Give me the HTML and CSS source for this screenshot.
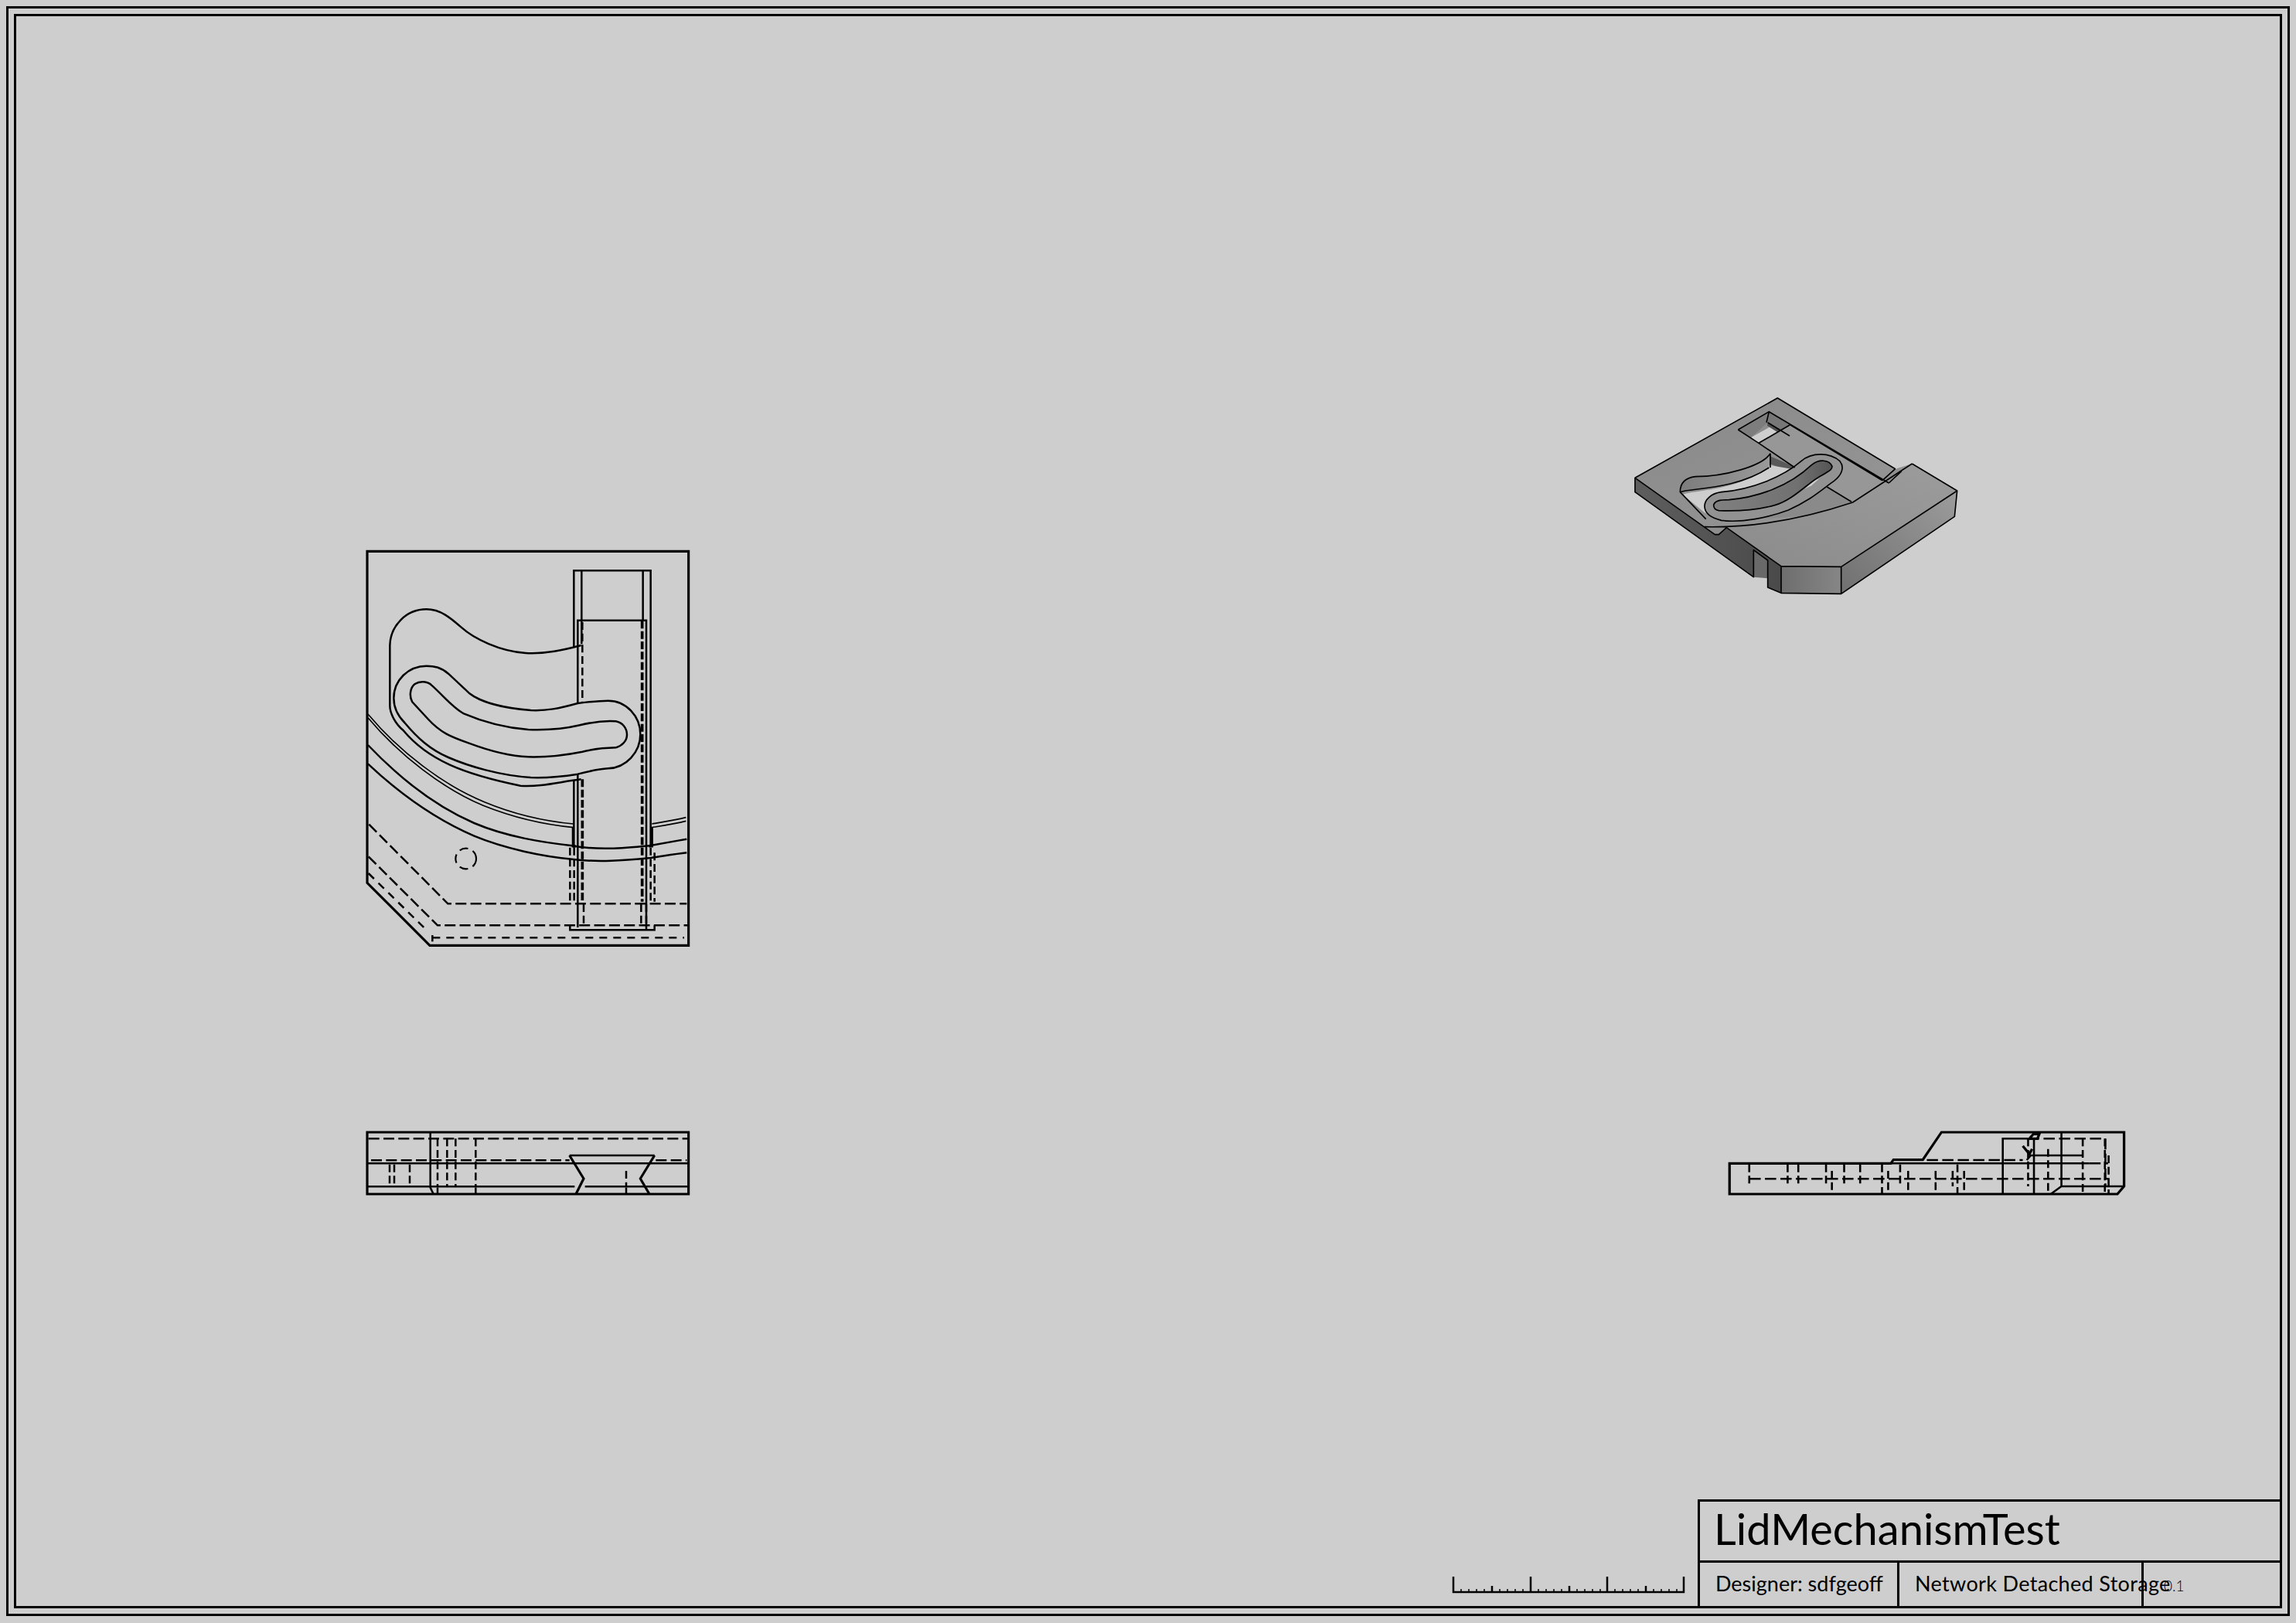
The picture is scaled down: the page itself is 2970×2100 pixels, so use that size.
FILE: index.html
```html
<!DOCTYPE html>
<html lang="en">
<head>
<meta charset="utf-8">
<title>LidMechanismTest</title>
<link rel="stylesheet" href="styles.css">
</head>
<body>
<main class="sheet">
  <svg class="drawing" viewBox="0 0 2970 2100" aria-hidden="true">
    <defs>
      <linearGradient id="gTop" x1="0" y1="0" x2="1" y2="1"><stop offset="0" stop-color="#888"/><stop offset="1" stop-color="#979797"/></linearGradient>
      <linearGradient id="gBlock" x1="0" y1="1" x2="1" y2="0"><stop offset="0" stop-color="#8a8a8a"/><stop offset="1" stop-color="#9c9c9c"/></linearGradient>
      <linearGradient id="gFront" x1="0" y1="0" x2="1" y2="0"><stop offset="0" stop-color="#6e6e6e"/><stop offset="1" stop-color="#868686"/></linearGradient>
      <linearGradient id="gRight" x1="0" y1="1" x2="1" y2="0"><stop offset="0" stop-color="#707070"/><stop offset="1" stop-color="#9c9c9c"/></linearGradient>
      <linearGradient id="gLeft" x1="0" y1="0" x2="1" y2="0"><stop offset="0" stop-color="#5e5e5e"/><stop offset="1" stop-color="#4a4a4a"/></linearGradient>
      <linearGradient id="gWall" x1="0" y1="0" x2="1" y2="0"><stop offset="0" stop-color="#7c7c7c"/><stop offset="1" stop-color="#9a9a9a"/></linearGradient>
      <linearGradient id="gSlot" x1="0" y1="0" x2="1" y2="0"><stop offset="0" stop-color="#808080"/><stop offset=".7" stop-color="#717171"/><stop offset="1" stop-color="#555"/></linearGradient>
    </defs>

    <!-- front view -->
    <g class="view" transform="translate(440 690) scale(.33333)">
      <path class="heavy" d="M105,70 H1352 V1600 H348 L105,1357 Z"/>
      <path class="line" d="M907,443 V145 H1205 V1210 M937,430 V145 M1175,340 V145 M922,660 V338 H1188 V1540"/>
      <path class="line" d="M922,935 V1530 M907,958 V1220"/>
      <path class="dash" d="M940,345 V660"/>
      <path class="dash-heavy" d="M1172,340 V1430 M940,955 V1440"/>
      <path class="line" d="M935,435 C880,450 800,470 720,465 C620,458 520,410 470,365 C430,330 390,295 335,295 C255,295 195,360 193,435 L193,670 C193,700 215,740 245,765 C340,880 480,935 700,980 C780,985 850,965 935,955"/>
      <path class="line" d="M922,660 C850,680 800,690 740,687 C650,680 550,660 500,620 L420,545 C390,520 365,515 335,515 C265,515 208,570 208,640 C208,680 225,710 250,735 C300,795 350,840 420,870 C500,905 620,940 740,948 C800,950 860,945 922,935 C960,925 1000,915 1040,913 C1110,910 1165,850 1165,780 C1165,710 1110,650 1040,650 C1000,650 960,655 922,660 Z"/>
      <path class="line" d="M1070,730 C1020,727 970,735 930,745 C880,757 810,765 730,762 C640,755 550,730 480,700 C440,680 400,630 355,590 C340,575 310,572 290,585 C270,600 268,635 280,655 L340,720 C390,775 430,790 500,815 C580,845 650,865 730,868 C800,870 880,860 940,848 C980,838 1030,833 1070,832 C1095,825 1113,805 1113,782 C1113,755 1095,735 1070,730 Z"/>
      <path class="line-thin" d="M108,702 C230,848 400,978 560,1043 C680,1093 800,1118 905,1128 M108,716 C230,862 400,992 555,1057 C680,1107 800,1132 905,1142 M1210,1128 C1260,1120 1300,1114 1342,1103 M1210,1142 C1260,1134 1300,1128 1342,1117"/>
      <path class="line" d="M108,822 C230,950 370,1060 520,1125 C650,1180 790,1200 895,1212 C1000,1232 1100,1222 1205,1212 C1260,1202 1300,1195 1345,1187"/>
      <path class="line" d="M108,895 C230,1010 370,1110 520,1175 C640,1225 790,1255 900,1265 C1000,1278 1100,1270 1205,1260 C1260,1252 1300,1245 1345,1240"/>
      <path class="dash-long" d="M112,1130 L418,1438 H1345 M110,1255 L378,1522 H1350"/>
      <path class="dash-short" d="M110,1320 L335,1540 M358,1570 H1335"/>
      <path class="line" d="M358,1560 V1585 M892,1522 V1540 H1220 V1522"/>
      <path class="dash" d="M892,1220 V1430 M908,1220 V1430 M1205,1220 V1430 M1220,1240 V1430 M1168,1440 V1520 M945,1440 V1520 M1188,1440 V1520"/>
      <path class="heavy" d="M904,1140 V1215 H915 M1210,1140 V1215 H1198"/>
      <circle class="dash-circle" cx="488" cy="1263" r="40"/>
    </g>

    <!-- isometric view -->
    <g class="iso" transform="translate(2080 490) scale(.33333)">
      <path fill="url(#gTop)" d="M105,385 L658,75 L1115,350 L1180,330 L950,480 L800,530 L600,570 L375,575 Z"/>
      <path fill="url(#gLeft)" d="M105,385 L415,605 L430,605 L460,578 L672,728 L672,832 L620,810 L620,705 L565,665 L565,770 L105,440 Z"/>
      <path fill="#696969" d="M565,665 L622,705 L620,775 L565,770 Z"/>
      <path fill="url(#gFront)" d="M672,728 L905,730 L905,835 L672,832 Z"/>
      <path fill="url(#gRight)" d="M905,730 L1355,435 L1345,535 L905,835 Z"/>
      <path fill="url(#gBlock)" d="M375,575 C600,580 800,530 950,480 L1075,410 L1180,330 L1355,435 L905,730 L672,728 L460,578 L430,605 L415,605 Z"/>

      <path fill="#cecece" d="M555,228 L645,178 L680,205 L585,250 Z"/>
      <path fill="#7d7d7d" d="M505,198 L625,128 L620,170 L555,228 Z"/>
      <path fill="#777" d="M625,128 L705,180 L665,205 L615,170 Z"/>
      <path fill="#4f4f4f" d="M620,170 L680,205 L665,212 L618,182 Z"/>
      <path fill="#979797" d="M585,250 L705,180 L1090,405 L950,480 L850,420 L725,345 Z"/>
      <path fill="#5a5a5a" d="M628,300 L725,342 L705,362 L630,330 Z"/>
      <path fill="#8f8f8f" d="M1065,395 L1115,350 L1140,358 L1090,405 Z"/>

      <path fill="#cecece" d="M290,450 C340,430 520,435 625,335 L720,352 L760,360 L800,420 L600,530 L450,555 L375,520 Z"/>
      <path fill="url(#gWall)" d="M630,290 C600,340 450,380 340,380 C295,385 280,410 280,440 C320,425 500,430 625,345 Z"/>
      <path fill="#8a8a8a" d="M850,420 L945,478 L800,530 L500,550 L700,510 Z"/>
      <path fill="#929292" d="M375,495 C375,470 400,445 440,440 C560,430 680,380 750,320 C790,285 860,285 900,320 C920,345 905,375 880,395 C830,430 790,470 700,510 C620,540 520,560 440,550 C400,540 375,525 375,495 Z"/>
      <path fill="url(#gSlot)" d="M410,490 C415,475 430,470 470,470 C580,460 700,420 790,335 C820,310 860,315 870,340 C870,355 855,360 830,375 C780,400 720,470 650,490 C580,510 500,515 430,512 C415,510 410,500 410,490 Z"/>
      <path fill="#cecece" d="M762,428 L800,395 L820,388 L790,415 Z"/>

      <path class="edge" d="M105,385 L658,75 L1115,350 M1180,330 L1355,435 L1345,535 L905,835 L672,832 L620,810 V705 L565,665 V770 L105,440 V385 L415,605 L430,605 L460,578 L672,728 L905,730 L1355,435 M905,730 V835 M672,728 V832 M1180,330 L950,480 C800,530 600,580 375,575"/>
      <path class="edge" d="M505,198 L625,128 L1090,405 M505,198 L585,250 L705,180 M585,250 L725,345 M850,420 L945,478 M705,178 L1065,395 M1065,395 L1115,350 M1090,405 L1140,358 M620,170 L705,222 M625,128 L615,170"/>
      <path class="edge" d="M630,290 C600,340 450,380 340,380 C295,385 280,410 280,440 C320,425 500,430 625,345 M630,290 V345 M280,440 L380,545"/>
      <path class="edge" d="M375,495 C375,470 400,445 440,440 C560,430 680,380 750,320 C790,285 860,285 900,320 C920,345 905,375 880,395 C830,430 790,470 700,510 C620,540 520,560 440,550 C400,540 375,525 375,495 Z M410,490 C415,475 430,470 470,470 C580,460 700,420 790,335 C820,310 860,315 870,340 C870,355 855,360 830,375 C780,400 720,470 650,490 C580,510 500,515 430,512 C415,510 410,500 410,490 Z"/>
    </g>

    <!-- plan view -->
    <g class="view" transform="translate(460 1440) scale(.33333)">
      <path class="heavy" d="M45,75 H1292 V315 H45 Z"/>
      <path class="line" d="M45,196 H1292 M45,286 H850 M890,286 H1292 M290,75 V290 L302,315 M318,290 V315 M466,290 V315 M1050,290 V315"/>
      <path class="dash-long" d="M50,100 H1290 M60,184 H830 M1165,184 H1285"/>
      <path class="line" d="M830,165 H1160"/>
      <path class="heavy" d="M830,165 L885,255 L855,315 M1160,165 L1105,255 L1140,315"/>
      <path class="dash" d="M132,200 V285 M150,200 V285 M210,200 V285 M318,100 V285 M355,100 V285 M388,100 V285 M466,100 V285 M1050,225 V285"/>
    </g>

    <!-- side view -->
    <g class="view" transform="translate(2220 1440) scale(.34483 .33333)">
      <path class="heavy" d="M50,196 V315 H1505 L1530,285 V75 H845 L775,182 H665 L655,196 Z"/>
      <path class="line" d="M50,196 H1400 M1075,315 V100 H1170 M1192,100 V315 M1295,75 V285 L1255,315 M1295,285 H1530 M1165,183 L1180,165 H1375"/>
      <path class="dash-long" d="M790,183 H1150 M1170,100 H1460 V285 M125,256 H1470 M1400,196 H1470"/>
      <path class="dash" d="M124,200 V285 M268,200 V285 M308,200 V285 M412,200 V285 M434,225 V315 M480,200 V285 M540,200 V285 M622,200 V315 M645,225 V315 M690,200 V285 M720,225 V315 M823,225 V315 M887,225 V285 M905,200 V315 M930,225 V315 M1170,100 V285 M1245,140 V315 M1375,100 V315 M1458,100 V315 M1472,165 V315"/>
      <path class="heavy" d="M1175,100 L1190,82 H1212 L1205,100 Z M1150,128 L1175,160 L1185,140"/>
    </g>

    <!-- scale bar -->
    <g class="scale-bar">
      <path class="line-real" d="M1880,2040 V2060 H2178 V2040 M1980,2040 V2060 M2079,2040 V2060"/>
      <path class="line-real" d="M1930,2052 V2060 M2030,2052 V2060 M2129,2052 V2060"/>
      <path class="tick" d="M1890,2056 V2060 M1900,2056 V2060 M1910,2056 V2060 M1920,2056 V2060 M1940,2056 V2060 M1950,2056 V2060 M1960,2056 V2060 M1970,2056 V2060 M1990,2056 V2060 M2000,2056 V2060 M2010,2056 V2060 M2020,2056 V2060 M2040,2056 V2060 M2050,2056 V2060 M2060,2056 V2060 M2070,2056 V2060 M2089,2056 V2060 M2099,2056 V2060 M2109,2056 V2060 M2119,2056 V2060 M2139,2056 V2060 M2149,2056 V2060 M2159,2056 V2060 M2169,2056 V2060"/>
    </g>
  </svg>

  <div class="frame">
    <div class="frame-inner">
      <section class="title-block">
        <h1 class="title">LidMechanismTest</h1>
        <div class="meta">
          <div class="cell cell-designer">Designer: sdfgeoff</div>
          <div class="cell cell-project">Network Detached Storage</div>
          <div class="cell cell-rev">0.1</div>
        </div>
      </section>
    </div>
  </div>
</main>
</body>
</html>
```
FILE: styles.css
```css
* { box-sizing: border-box; }
html, body { margin: 0; padding: 0; }
body { width: 2970px; height: 2100px; overflow: hidden; background: #cecece; }

.sheet {
  position: relative;
  width: 2970px;
  height: 2100px;
  padding: 8px 8px 9px;
  background: #cecece;
  font-family: Lato, "Liberation Sans", sans-serif;
  color: #000;
}
.drawing { position: absolute; left: 0; top: 0; width: 2970px; height: 2100px; }
.frame { position: relative; height: 100%; border: 3px solid #000; padding: 7px; }
.frame-inner { position: relative; height: 100%; border: 3px solid #000; }

.title-block {
  position: absolute;
  right: 0;
  bottom: 0;
  width: 753px;
  height: 138px;
  display: flex;
  flex-direction: column;
  border-left: 3px solid #000;
  border-top: 3px solid #000;
}
.title {
  margin: 0;
  height: 79px;
  padding: 4px 0 0 18px;
  border-bottom: 3px solid #000;
  font-size: 56px;
  line-height: 62px;
  font-weight: 400;
  white-space: nowrap;
}
.meta { flex: 1; display: flex; font-size: 27px; line-height: 32px; white-space: nowrap; }
.cell { padding: 11px 0 0 20px; }
.cell-designer { width: 258px; border-right: 3px solid #000; }
.cell-project { width: 316px; border-right: 3px solid #000; letter-spacing: .33px; }
.cell-rev { flex: 1; padding: 14px 0 0 26px; font-size: 19px; font-weight: 300; }

.view path, .view circle { fill: none; stroke: #000; }
.heavy { stroke-width: 9.5; }
.line { stroke-width: 7.5; }
.line-thin { stroke-width: 5; }
.dash { stroke-width: 7.5; stroke-dasharray: 30 14; }
.dash-heavy { stroke-width: 11; stroke-dasharray: 30 10; }
.dash-long { stroke-width: 7.5; stroke-dasharray: 42 16; }
.dash-short { stroke-width: 7.5; stroke-dasharray: 30 24; }
.dash-circle { stroke-width: 6.5; stroke-dasharray: 34 20; }
.iso .edge { fill: none; stroke: #000; stroke-width: 5; stroke-linejoin: round; }
.scale-bar path { fill: none; stroke: #000; }
.line-real { stroke-width: 2.5; }
.tick { stroke-width: 1.5; }
```
